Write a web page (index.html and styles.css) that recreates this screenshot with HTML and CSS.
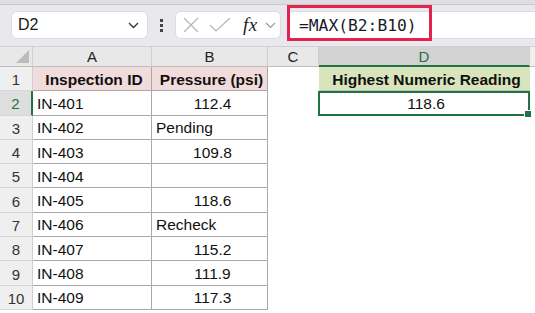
FILE: index.html
```html
<!DOCTYPE html>
<html lang="en">

<head>
    <meta charset="UTF-8">
    <title>MAX formula</title>
    <link rel="stylesheet" href="styles.css">
</head>

<body>
    <!-- formula bar -->
    <div class="ribbon-edge"></div>
    <div class="formula-row">
        <div class="name-box">
            <span>D2</span>
            <svg class="chev" width="11" height="7" viewBox="0 0 11 7"><path d="M1 1 L5.5 5.5 L10 1" fill="none" stroke="#333" stroke-width="1.3"/></svg>
        </div>
        <div class="dots"><i></i><i></i><i></i></div>
        <div class="fx-box">
            <svg class="ic-x" width="16" height="16" viewBox="0 0 16 16"><path d="M1 1 L15 15 M15 1 L1 15" stroke="#b5b5b5" stroke-width="1.2"/></svg>
            <svg class="ic-ok" width="22" height="16" viewBox="0 0 22 16"><path d="M1 8 L7 14 L21 1" fill="none" stroke="#b5b5b5" stroke-width="1.2"/></svg>
            <span class="fx">fx</span>
            <svg width="11" height="7" viewBox="0 0 11 7"><path d="M1 1 L5.5 5.5 L10 1" fill="none" stroke="#999" stroke-width="1.2"/></svg>
        </div>
        <div class="formula-input">
            <span class="formula">=MAX(B2:B10)</span>
            <div class="highlight"></div>
        </div>
    </div>

    <!-- sheet -->
    <div class="sheet">
        <div class="hd corner"><span class="tri"></span></div>
        <div class="hd">A</div>
        <div class="hd">B</div>
        <div class="hd">C</div>
        <div class="hd hd-active">D</div>
        <div class="hd hd-end"></div>

        <div class="rh">1</div>
        <div class="c t head-a">Inspection ID</div>
        <div class="c t head-a">Pressure (psi)</div>
        <div class="c"></div>
        <div class="c head-d">Highest Numeric Reading</div>
        <div class="c"></div>

        <div class="rh rh-active">2</div>
        <div class="c t">IN-401</div>
        <div class="c t num">112.4</div>
        <div class="c"></div>
        <div class="c sel">118.6<span class="handle"></span></div>
        <div class="c"></div>

        <div class="rh">3</div>
        <div class="c t">IN-402</div>
        <div class="c t">Pending</div>
        <div class="c"></div><div class="c"></div><div class="c"></div>

        <div class="rh">4</div>
        <div class="c t">IN-403</div>
        <div class="c t num">109.8</div>
        <div class="c"></div><div class="c"></div><div class="c"></div>

        <div class="rh">5</div>
        <div class="c t">IN-404</div>
        <div class="c t"></div>
        <div class="c"></div><div class="c"></div><div class="c"></div>

        <div class="rh">6</div>
        <div class="c t">IN-405</div>
        <div class="c t num">118.6</div>
        <div class="c"></div><div class="c"></div><div class="c"></div>

        <div class="rh">7</div>
        <div class="c t">IN-406</div>
        <div class="c t">Recheck</div>
        <div class="c"></div><div class="c"></div><div class="c"></div>

        <div class="rh">8</div>
        <div class="c t">IN-407</div>
        <div class="c t num">115.2</div>
        <div class="c"></div><div class="c"></div><div class="c"></div>

        <div class="rh">9</div>
        <div class="c t">IN-408</div>
        <div class="c t num">111.9</div>
        <div class="c"></div><div class="c"></div><div class="c"></div>

        <div class="rh">10</div>
        <div class="c t">IN-409</div>
        <div class="c t num">117.3</div>
        <div class="c"></div><div class="c"></div><div class="c"></div>
    </div>
</body>

</html>
```

FILE: styles.css
```css
body {
    margin: 0;
    font-family: "Liberation Sans", Arial, sans-serif;
    background: #fff;
    overflow: hidden;
}

/* formula bar */
.ribbon-edge {
    height: 4px;
    background: #dedee2;
    border-bottom: 1px solid #c9c9cd;
}

.formula-row {
    display: flex;
    align-items: flex-start;
    height: 42px;
    padding-top: 6px;
    box-sizing: border-box;
    background: #e9e9ed;
    border-bottom: 1px solid #d0d0d4;
}

.name-box {
    margin-left: 11px;
    width: 137px;
    height: 28px;
    box-sizing: border-box;
    background: #fff;
    border: 1px solid #dcdce0;
    border-radius: 6px;
    display: flex;
    align-items: center;
    justify-content: space-between;
    padding: 0 8px 0 6px;
    font-size: 16px;
    color: #1a1a1a;
}

.chev {
    margin-top: 1px;
}

.dots {
    width: 27px;
    height: 28px;
    display: flex;
    flex-direction: column;
    align-items: center;
    justify-content: center;
    gap: 2px;
}

.dots i {
    width: 3px;
    height: 3px;
    background: #444;
}

.fx-box {
    width: 106px;
    height: 28px;
    box-sizing: border-box;
    background: #fff;
    border: 1px solid #dcdce0;
    border-radius: 6px;
    display: flex;
    align-items: center;
    padding-left: 7px;
}

.ic-ok {
    margin-left: 10px;
}

.fx {
    font-family: "Liberation Serif", "Times New Roman", serif;
    font-style: italic;
    font-size: 19px;
    color: #222;
    margin-left: 12px;
    margin-right: 7px;
    letter-spacing: 0.5px;
}

.formula-input {
    position: relative;
    margin-left: 6px;
    flex: 1;
    height: 28px;
    box-sizing: border-box;
    background: #fff;
    border: 1px solid #dcdce0;
    border-right: none;
    border-radius: 6px 0 0 6px;
    display: flex;
    align-items: center;
    padding-left: 11px;
}

.formula {
    font-family: "DejaVu Sans Mono", "Liberation Mono", monospace;
    font-size: 16.3px;
    color: #1a1a2a;
}

.highlight {
    position: absolute;
    left: -1px;
    top: -7px;
    width: 145px;
    height: 36px;
    box-sizing: border-box;
    border: 3px solid #e2234e;
}

/* sheet grid */
.sheet {
    display: grid;
    grid-template-columns: 33px 119px 116px 51px 211px 1fr;
    grid-template-rows: 20px repeat(10, 24.3px);
    font-size: 15.5px;
    color: #111;
}

.hd {
    background: #e8e8e8;
    border-right: 1px solid #cfcfcf;
    border-bottom: 1px solid #bdbdbd;
    display: flex;
    align-items: center;
    justify-content: center;
    font-size: 15px;
    color: #222;
}

.corner {
    position: relative;
}

.tri {
    position: absolute;
    right: 3px;
    bottom: 3px;
    width: 0;
    height: 0;
    border-left: 13px solid transparent;
    border-bottom: 13px solid #bcbcbc;
}

.hd-active {
    background: #d2d2d2;
    color: #217346;
    border-bottom: 2px solid #217346;
}

.hd-end {
    background: #efefef;
    border-right: none;
}

.rh {
    background: #efefef;
    border-right: 1px solid #cfcfcf;
    border-bottom: 1px solid #d6d6d6;
    display: flex;
    align-items: center;
    justify-content: center;
    padding-top: 2px;
    box-sizing: border-box;
    font-size: 15px;
    color: #333;
}

.rh-active {
    background: #dedede;
    color: #217346;
    border-right: 2px solid #217346;
}

.c {
    display: flex;
    align-items: center;
    padding: 2px 0 0 4px;
    box-sizing: border-box;
    white-space: nowrap;
}

/* table A1:B10 borders */
.t {
    border-right: 1px solid #a8a8a8;
    border-bottom: 1px solid #a8a8a8;
}

.num {
    justify-content: center;
    padding-left: 6px;
}

.head-a {
    background: #f2dcdb;
    font-weight: bold;
    justify-content: center;
}

.head-d {
    background: #d8e4bc;
    font-weight: bold;
    justify-content: center;
    border-bottom: 1px solid #bfbfbf;
}

.sel {
    position: relative;
    justify-content: center;
    border: 2px solid #217346;
    margin-left: -1px;
}

.handle {
    position: absolute;
    right: -4px;
    bottom: -4px;
    width: 6px;
    height: 6px;
    background: #217346;
    border: 1px solid #fff;
}
```
